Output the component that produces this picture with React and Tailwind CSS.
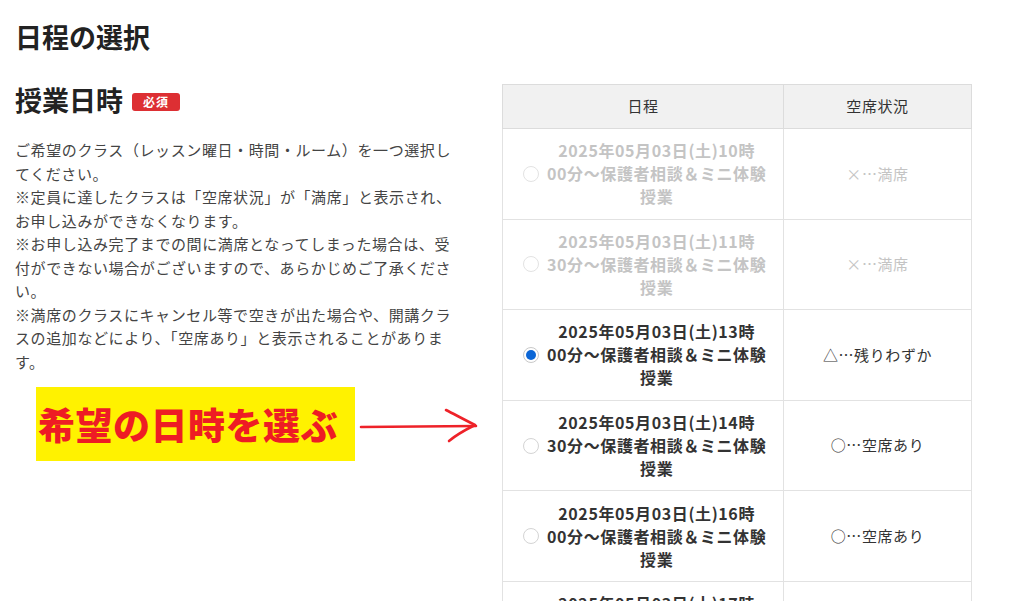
const FONT = "font-['Noto_Sans_CJK_JP','Noto_Sans',sans-serif]"

const slots = [
  { lines: ['2025年05月03日(土)10時', '00分～保護者相談＆ミニ体験', '授業'], status: '×…満席', disabled: true },
  { lines: ['2025年05月03日(土)11時', '30分～保護者相談＆ミニ体験', '授業'], status: '×…満席', disabled: true },
  { lines: ['2025年05月03日(土)13時', '00分～保護者相談＆ミニ体験', '授業'], status: '△…残りわずか', checked: true },
  { lines: ['2025年05月03日(土)14時', '30分～保護者相談＆ミニ体験', '授業'], status: '○…空席あり' },
  { lines: ['2025年05月03日(土)16時', '00分～保護者相談＆ミニ体験', '授業'], status: '○…空席あり' },
  { lines: ['2025年05月03日(土)17時', '30分～保護者相談＆ミニ体験', '授業'], status: '○…空席あり' },
]

function Radio({ checked, disabled }) {
  if (checked) {
    return (
      <span className="flex h-[16px] w-[16px] shrink-0 items-center justify-center rounded-full border border-[#c9c9c9] bg-white">
        <span className="h-[10px] w-[10px] rounded-full bg-[#0b66d6]" />
      </span>
    )
  }
  return (
    <span
      className={
        disabled
          ? 'h-[16px] w-[16px] shrink-0 rounded-full border border-[#e3e3e3] bg-white'
          : 'h-[16px] w-[16px] shrink-0 rounded-full border border-[#d4d4d4] bg-white'
      }
    />
  )
}

function Arrow() {
  return (
    <svg width="122" height="44" viewBox="0 0 122 44" className="ml-[4px] shrink-0">
      <path d="M2 25 L117 24" stroke="#ee2229" strokeWidth="2.6" fill="none" strokeLinecap="round" />
      <path
        d="M87 8 C95 12 104 17 116 23 C106 28 97 33 90 39"
        stroke="#ee2229"
        strokeWidth="2.6"
        fill="none"
        strokeLinecap="round"
        strokeLinejoin="round"
      />
    </svg>
  )
}

export default function App() {
  return (
    <div className={`min-h-screen bg-white pl-[15px] text-[#333] ${FONT}`}>
      <h1 className="pt-[17px] text-[27px] font-bold leading-[39px] text-[#222]">日程の選択</h1>

      <div className="mt-[28px] flex items-start gap-[42px]">
        {/* left: description */}
        <div className="w-[445px] shrink-0">
          <div className="flex items-center gap-[9px]">
            <h2 className="text-[27px] font-bold leading-[32px] text-[#222]">授業日時</h2>
            <span className="mt-[3px] rounded-[3px] bg-[#dd2f33] px-[11px] text-[12px] font-bold leading-[18px] tracking-[1px] text-white">
              必須
            </span>
          </div>

          <p className="mt-[22px] whitespace-nowrap text-[15px] leading-[23.5px] tracking-[0.6px] text-[#444]">
            ご希望のクラス（レッスン曜日・時間・ルーム）を一つ選択し<br />
            てください。<br />
            ※定員に達したクラスは「空席状況」が「満席」と表示され、<br />
            お申し込みができなくなります。<br />
            ※お申し込み完了までの間に満席となってしまった場合は、受<br />
            付ができない場合がございますので、あらかじめご了承くださ<br />
            い。<br />
            ※満席のクラスにキャンセル等で空きが出た場合や、開講クラ<br />
            スの追加などにより、「空席あり」と表示されることがありま<br />
            す。
          </p>

          <div className="mt-[14px] ml-[21px] flex items-center">
            <div className="flex h-[74px] w-[319px] shrink-0 items-center bg-[#fff200] pl-[2px]">
              <span className="text-[37px] font-extrabold leading-none tracking-[0.5px] text-[#ee1c24]">
                希望の日時を選ぶ
              </span>
            </div>
            <Arrow />
          </div>
        </div>

        {/* right: schedule table */}
        <table className="w-[470px] shrink-0 table-fixed border-collapse border border-[#dcdcdc]">
          <thead>
            <tr className="h-[44px] bg-[#f1f1f1]">
              <th className="w-[281px] border border-[#dcdcdc] text-[15px] font-normal tracking-[0.6px] text-[#333]">日程</th>
              <th className="border border-[#dcdcdc] text-[15px] font-normal tracking-[0.6px] text-[#333]">空席状況</th>
            </tr>
          </thead>
          <tbody>
            {slots.map((s, i) => (
              <tr key={i} className="h-[90.6px]">
                <td className="border border-[#e2e2e2] py-[10px] pl-[20px] pr-[20px]">
                  <div className="flex items-center gap-[8px]">
                    <Radio checked={s.checked} disabled={s.disabled} />
                    <div
                      className={
                        s.disabled
                          ? 'flex-1 text-center text-[16px] font-bold leading-[23px] tracking-[0.6px] whitespace-nowrap text-[#c4c4c4]'
                          : 'flex-1 text-center text-[16px] font-bold leading-[23px] tracking-[0.6px] whitespace-nowrap text-[#333]'
                      }
                    >
                      {s.lines.map((l, j) => (
                        <div key={j}>{l}</div>
                      ))}
                    </div>
                  </div>
                </td>
                <td
                  className={
                    s.disabled
                      ? 'border border-[#e2e2e2] text-center text-[15px] tracking-[0.6px] text-[#c4c4c4]'
                      : 'border border-[#e2e2e2] text-center text-[15px] tracking-[0.6px] text-[#333]'
                  }
                >
                  {s.status}
                </td>
              </tr>
            ))}
          </tbody>
        </table>
      </div>
    </div>
  )
}
